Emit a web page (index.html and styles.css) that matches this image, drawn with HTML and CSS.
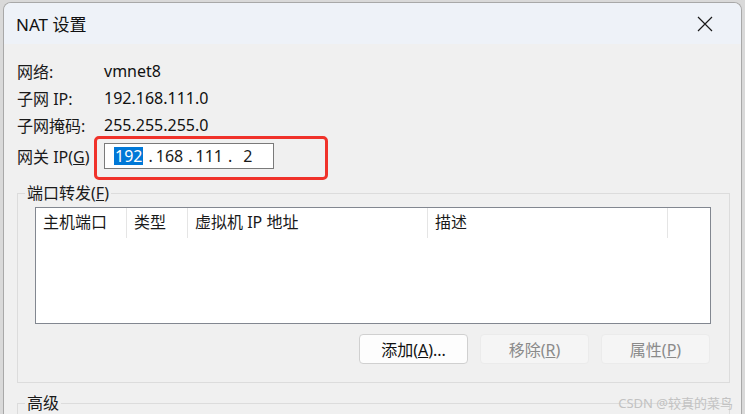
FILE: index.html
```html
<!DOCTYPE html>
<html>
  <head>
    <title>NAT 设置</title>
    <link rel="stylesheet" href="styles.css">
  </head>
  <body>
    <div class="window">
      <div class="titlebar">
        <span class="title">NAT 设置</span>
        <svg class="close" width="16" height="16" viewBox="0 0 16 16">
          <path d="M1 1 L15 15 M15 1 L1 15" stroke="#1a1a1a" stroke-width="1.2" fill="none"/>
        </svg>
      </div>

      <div class="content">
        <div class="info">
          <span class="label">网络:</span><span class="value">vmnet8</span>
          <span class="label">子网 IP:</span><span class="value">192.168.111.0</span>
          <span class="label">子网掩码:</span><span class="value">255.255.255.0</span>
        </div>

        <div class="gateway">
          <span class="label">网关 IP(<u>G</u>)</span>
          <div class="ip-wrap">
            <div class="ip-input">
              <span class="octet selected">192</span><span class="dot">.</span><span class="octet">168</span><span class="dot">.</span><span class="octet">111</span><span class="dot">.</span><span class="octet last">2</span>
            </div>
            <div class="mark"></div>
          </div>
        </div>

        <div class="group">
          <div class="group-title">端口转发(<u>F</u>)</div>
          <div class="listview">
            <div class="list-header">
              <div class="col c1">主机端口</div>
              <div class="col c2">类型</div>
              <div class="col c3">虚拟机 IP 地址</div>
              <div class="col c4">描述</div>
              <div class="col c5"></div>
            </div>
          </div>
          <div class="buttons">
            <button class="btn">添加(<u>A</u>)...</button>
            <button class="btn" disabled>移除(<u>R</u>)</button>
            <button class="btn" disabled>属性(<u>P</u>)</button>
          </div>
        </div>

        <div class="group advanced">
          <div class="group-title">高级</div>
        </div>
      </div>

      <div class="watermark">CSDN @较真的菜鸟</div>
    </div>
  </body>
</html>
```

FILE: styles.css
```css
body {
  margin: 0;
  height: 414px;
  overflow: hidden;
  background: #d9d9d9;
  font-family: "Noto Sans", "Noto Sans CJK SC", sans-serif;
  font-size: 16px;
  color: #1a1a1a;
}

.window {
  position: relative;
  margin: 2px 0 0 3px;
  width: 737px;
  height: 420px;
  background: #f0f0f0;
  border: 1px solid #a8a8a8;
  border-bottom: none;
  border-radius: 8px 8px 0 0;
  overflow: hidden;
}

.titlebar {
  height: 41px;
  background: #eef2f8;
  display: flex;
  align-items: center;
  justify-content: space-between;
  padding: 0 28px 0 12px;
}

.title {
  font-size: 17px;
  color: #111;
}

.content {
  padding: 13px 0 0 13px;
}

.info {
  display: grid;
  grid-template-columns: 87px auto;
  grid-auto-rows: 27px;
  align-items: center;
}

.value {
  color: #111;
}

.gateway {
  display: flex;
  align-items: center;
  margin-top: 5px;
}

.gateway .label {
  width: 87px;
}

.ip-wrap {
  position: relative;
}

.ip-input {
  background: #fff;
  border: 1px solid #7a7a7a;
  display: flex;
  align-items: center;
  padding-left: 9px;
  box-sizing: border-box;
  width: 170px;
  height: 26px;
  font-size: 16px;
}

.octet.selected {
  background: #0078d7;
  color: #fff;
  line-height: 18px;
  padding: 0 1px;
}

.dot {
  margin: 0 3px 0 5px;
}

.octet.last {
  margin-left: 8px;
}

.mark {
  position: absolute;
  left: -10px;
  top: -7px;
  width: 234px;
  height: 44px;
  border: 3px solid #f0322a;
  border-radius: 5px;
  box-sizing: border-box;
}

.group {
  width: 711px;
  margin-top: 24px;
  border: 1px solid #dcdcdc;
  padding-bottom: 18px;
}

.group-title {
  width: fit-content;
  margin: -12px 0 0 7px;
  padding: 0 2px;
  line-height: 22px;
  background: #f0f0f0;
}

.listview {
  margin: 3px 0 0 17px;
  width: 674px;
  height: 115px;
  background: #fff;
  border: 1px solid #828790;
}

.list-header {
  display: flex;
  height: 30px;
}

.col {
  box-sizing: border-box;
  padding-left: 7px;
  line-height: 28px;
  border-right: 1px solid #e5e5e5;
}

.c1 { width: 91px; }
.c2 { width: 61px; }
.c3 { width: 240px; }
.c4 { width: 240px; }
.c5 { flex: 1; border-right: none; }

.buttons {
  display: flex;
  justify-content: flex-end;
  gap: 12px;
  margin: 10px 19px 0 0;
}

.btn {
  width: 109px;
  height: 30px;
  font-family: inherit;
  font-size: 16px;
  background: #fdfdfd;
  color: #111;
  border: 1px solid #d0d0d0;
  border-radius: 4px;
}

.btn:disabled {
  background: #f5f5f5;
  color: #8a8a8a;
  border-color: #ebebeb;
}

.group.advanced {
  margin-top: 20px;
  height: 40px;
}

.watermark {
  position: absolute;
  right: 8px;
  top: 390px;
  font-size: 13px;
  color: #c2c2c2;
}
```
